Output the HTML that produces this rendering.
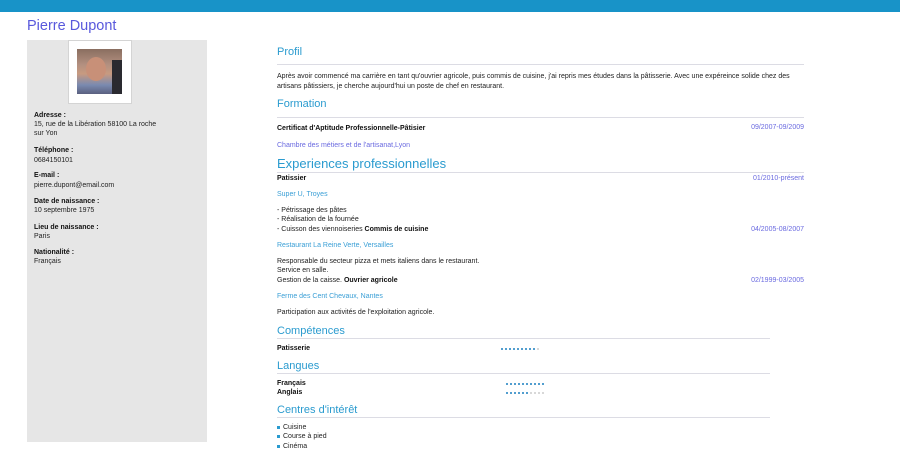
<!DOCTYPE html>
<html><head><meta charset="utf-8"><style>
*{margin:0;padding:0;box-sizing:border-box}
body{width:900px;height:457px;background:#fff;position:relative;overflow:hidden;font-family:"Liberation Sans",sans-serif;font-size:7px;color:#222}
div,span{position:absolute;white-space:nowrap}
.b{font-weight:bold;color:#111}
.h{color:#2a9bcf;font-size:11px}
.l{height:1px;background:#dcdce4}
.d{color:#6a6ae0;right:96px}
.c{color:#3a9fd6}
.p{color:#6a6ae0}
.dots{font-size:0;height:2px}
.dots i{position:absolute;top:0;width:2px;height:2px;background:#1c7fc0;border-radius:1px}
.dots i.g{background:#ccc}
.sq{display:inline-block;width:3px;height:3px;background:#2a9bcf;margin-right:3px;vertical-align:middle;position:static}
</style></head><body>
<div style="left:0;top:0;width:900px;height:12px;background:#1893c8"></div>
<div style="left:27px;top:18px;font-size:14.5px;color:#5858dc">Pierre Dupont</div>
<div style="left:27px;top:40px;width:180px;height:402px;background:#e6e6e6"></div>
<div style="left:68px;top:40px;width:64px;height:64px;background:#fff;border:1px solid #d4d4d4"></div>
<div style="left:77px;top:49px;width:45px;height:45px;background:linear-gradient(180deg,#8a6e60 0%,#b39080 35%,#c89a80 55%,#7a8ab0 80%,#5a6080 100%)"></div>
<div style="left:86px;top:57px;width:20px;height:24px;border-radius:50%;background:#c89078"></div>
<div style="left:112px;top:60px;width:10px;height:34px;background:#2a2a30"></div>
<div class="b" style="left:34px;top:112px">Adresse :</div>
<div style="left:34px;top:121px">15, rue de la Libération 58100 La roche</div>
<div style="left:34px;top:130px">sur Yon</div>
<div class="b" style="left:34px;top:147px">Téléphone :</div>
<div style="left:34px;top:157px">0684150101</div>
<div class="b" style="left:34px;top:172px">E-mail :</div>
<div style="left:34px;top:182px">pierre.dupont@email.com</div>
<div class="b" style="left:34px;top:198px">Date de naissance :</div>
<div style="left:34px;top:207px">10 septembre 1975</div>
<div class="b" style="left:34px;top:224px">Lieu de naissance :</div>
<div style="left:34px;top:233px">Paris</div>
<div class="b" style="left:34px;top:249px">Nationalité :</div>
<div style="left:34px;top:258px">Français</div>

<div class="h" style="left:277px;top:46px">Profil</div>
<div class="l" style="left:277px;top:64px;width:527px"></div>
<div style="left:277px;top:73px">Après avoir commencé ma carrière en tant qu'ouvrier agricole, puis commis de cuisine, j'ai repris mes études dans la pâtisserie. Avec une expéreince solide chez des</div>
<div style="left:277px;top:83px">artisans pâtissiers, je cherche aujourd'hui un poste de chef en restaurant.</div>
<div class="h" style="left:277px;top:98px">Formation</div>
<div class="l" style="left:277px;top:117px;width:527px"></div>
<div class="b" style="left:277px;top:125px">Certificat d'Aptitude Professionnelle-Pâtisier</div>
<div class="d" style="top:124px">09/2007-09/2009</div>
<div class="p" style="left:277px;top:142px">Chambre des métiers et de l'artisanat,Lyon</div>
<div class="h" style="left:277px;top:156px;font-size:13px">Experiences professionnelles</div>
<div class="l" style="left:277px;top:172px;width:527px"></div>
<div class="b" style="left:277px;top:175px">Patissier</div>
<div class="d" style="top:175px">01/2010-présent</div>
<div class="c" style="left:277px;top:191px">Super U, Troyes</div>
<div style="left:277px;top:207px">- Pétrissage des pâtes</div>
<div style="left:277px;top:216px">- Réalisation de la fournée</div>
<div style="left:277px;top:226px">- Cuisson des viennoiseries <b style="color:#111">Commis de cuisine</b></div>
<div class="d" style="top:226px">04/2005-08/2007</div>
<div class="c" style="left:277px;top:242px">Restaurant La Reine Verte, Versailles</div>
<div style="left:277px;top:258px">Responsable du secteur pizza et mets italiens dans le restaurant.</div>
<div style="left:277px;top:267px">Service en salle.</div>
<div style="left:277px;top:277px">Gestion de la caisse. <b style="color:#111">Ouvrier agricole</b></div>
<div class="d" style="top:277px">02/1999-03/2005</div>
<div class="c" style="left:277px;top:293px">Ferme des Cent Chevaux, Nantes</div>
<div style="left:277px;top:309px">Participation aux activités de l'exploitation agricole.</div>
<div class="h" style="left:277px;top:325px">Compétences</div>
<div class="l" style="left:277px;top:338px;width:493px"></div>
<div class="b" style="left:277px;top:345px">Patisserie</div>
<div class="dots" style="left:501px;top:348px"><i style="left:0"></i><i style="left:4px"></i><i style="left:8px"></i><i style="left:12px"></i><i style="left:16px"></i><i style="left:20px"></i><i style="left:24px"></i><i style="left:28px"></i><i style="left:32px"></i><i class="g" style="left:36px"></i></div>
<div class="h" style="left:277px;top:360px">Langues</div>
<div class="l" style="left:277px;top:373px;width:493px"></div>
<div class="b" style="left:277px;top:380px">Français</div>
<div class="dots" style="left:506px;top:383px"><i style="left:0"></i><i style="left:4px"></i><i style="left:8px"></i><i style="left:12px"></i><i style="left:16px"></i><i style="left:20px"></i><i style="left:24px"></i><i style="left:28px"></i><i style="left:32px"></i><i style="left:36px"></i></div>
<div class="b" style="left:277px;top:389px">Anglais</div>
<div class="dots" style="left:506px;top:392px"><i style="left:0"></i><i style="left:4px"></i><i style="left:8px"></i><i style="left:12px"></i><i style="left:16px"></i><i style="left:20px"></i><i class="g" style="left:24px"></i><i class="g" style="left:28px"></i><i class="g" style="left:32px"></i><i class="g" style="left:36px"></i></div>
<div class="h" style="left:277px;top:404px">Centres d'intérêt</div>
<div class="l" style="left:277px;top:417px;width:493px"></div>
<div style="left:277px;top:424px"><span class="sq"></span>Cuisine</div>
<div style="left:277px;top:433px"><span class="sq"></span>Course à pied</div>
<div style="left:277px;top:443px"><span class="sq"></span>Cinéma</div>
</body></html>
